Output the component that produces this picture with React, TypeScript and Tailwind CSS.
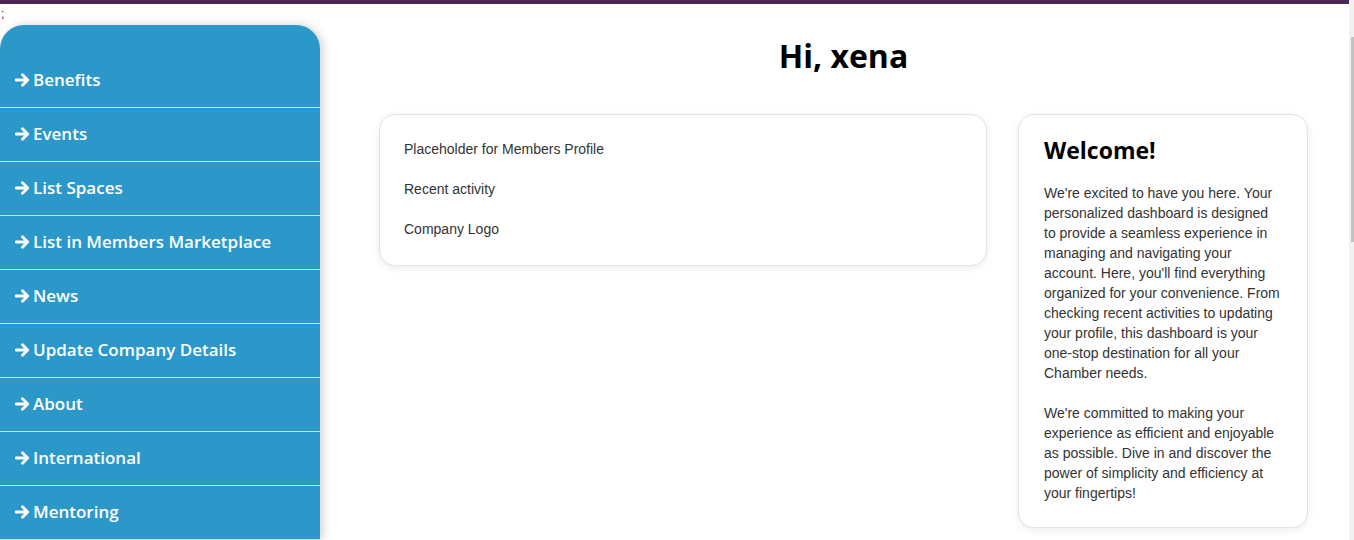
const menu = [
  "Benefits",
  "Events",
  "List Spaces",
  "List in Members Marketplace",
  "News",
  "Update Company Details",
  "About",
  "International",
  "Mentoring",
];

const heading = { fontFamily: '"Open Sans", "Noto Sans", sans-serif' };

function Arrow() {
  return (
    <svg viewBox="0 0 15 14" className="w-[15px] h-[14px] shrink-0" fill="none" stroke="currentColor" strokeWidth="2.8">
      <path d="M1 7h11" strokeLinecap="round" />
      <path d="M7.5 1.8 12.7 7l-5.2 5.2" strokeLinecap="round" strokeLinejoin="round" />
    </svg>
  );
}

export default function App() {
  return (
    <div className="h-[540px] flex overflow-hidden bg-white">
      <div className="flex-1 flex flex-col min-w-0">
        <div className="h-1 bg-[#4a2758]" />
        <div className="h-[21px] text-[12px] leading-[14px] pl-[1px] pt-[3px] text-[#333]" style={{ fontFamily: '"Liberation Sans", sans-serif' }}>
          ;
        </div>
        <div className="flex flex-1 min-h-0">
          <aside
            className="w-[320px] shrink-0 bg-[#2b98c9] rounded-t-[24px] pt-[29px] shadow-[3px_0_10px_rgba(0,0,0,0.18)] overflow-hidden"
            style={heading}
          >
            {menu.map((item) => (
              <div
                key={item}
                className="h-[54px] border-b border-[#d3dde2] flex items-center gap-[3px] pl-[15px] pb-[2px] text-white text-[17px] font-[550]"
              >
                <Arrow />
                <span>{item}</span>
              </div>
            ))}
          </aside>

          <main className="flex-1 pl-[59px] pr-[41px]">
            <h1 className="text-center text-[32px] font-bold leading-[38px] mt-[12px] text-black" style={heading}>
              Hi, xena
            </h1>
            <div
              className="flex items-start gap-[31px] mt-[39px] text-[14px] text-[#333]"
              style={{ fontFamily: '"Liberation Sans", Arial, sans-serif' }}
            >
              <div className="flex-1 bg-white border border-[#e3e3e3] rounded-[16px] shadow-[0_2px_8px_rgba(0,0,0,0.08)] px-6 pt-[24px] pb-[26px] flex flex-col gap-5 leading-5">
                <p>Placeholder for Members Profile</p>
                <p>Recent activity</p>
                <p>Company Logo</p>
              </div>
              <div className="w-[290px] shrink-0 bg-white border border-[#e3e3e3] rounded-[16px] shadow-[0_2px_8px_rgba(0,0,0,0.08)] px-[25px] pt-[25px] pb-[24px] leading-5">
                <h2 className="text-[23px] font-bold leading-[20px] mb-[23px] text-black" style={heading}>
                  Welcome!
                </h2>
                <p>
                  We're excited to have you here. Your personalized dashboard is designed to provide a seamless
                  experience in managing and navigating your account. Here, you'll find everything organized for
                  your convenience. From checking recent activities to updating your profile, this dashboard is
                  your one-stop destination for all your Chamber needs.
                </p>
                <p className="mt-5">
                  We're committed to making your experience as efficient and enjoyable as possible. Dive in and
                  discover the power of simplicity and efficiency at your fingertips!
                </p>
              </div>
            </div>
          </main>
        </div>
      </div>
      <div className="w-[5px] shrink-0 bg-[#f1f1f1] pt-[37px]">
        <div className="ml-[2px] w-[3px] h-[205px] bg-[#c1c1c1]" />
      </div>
    </div>
  );
}
